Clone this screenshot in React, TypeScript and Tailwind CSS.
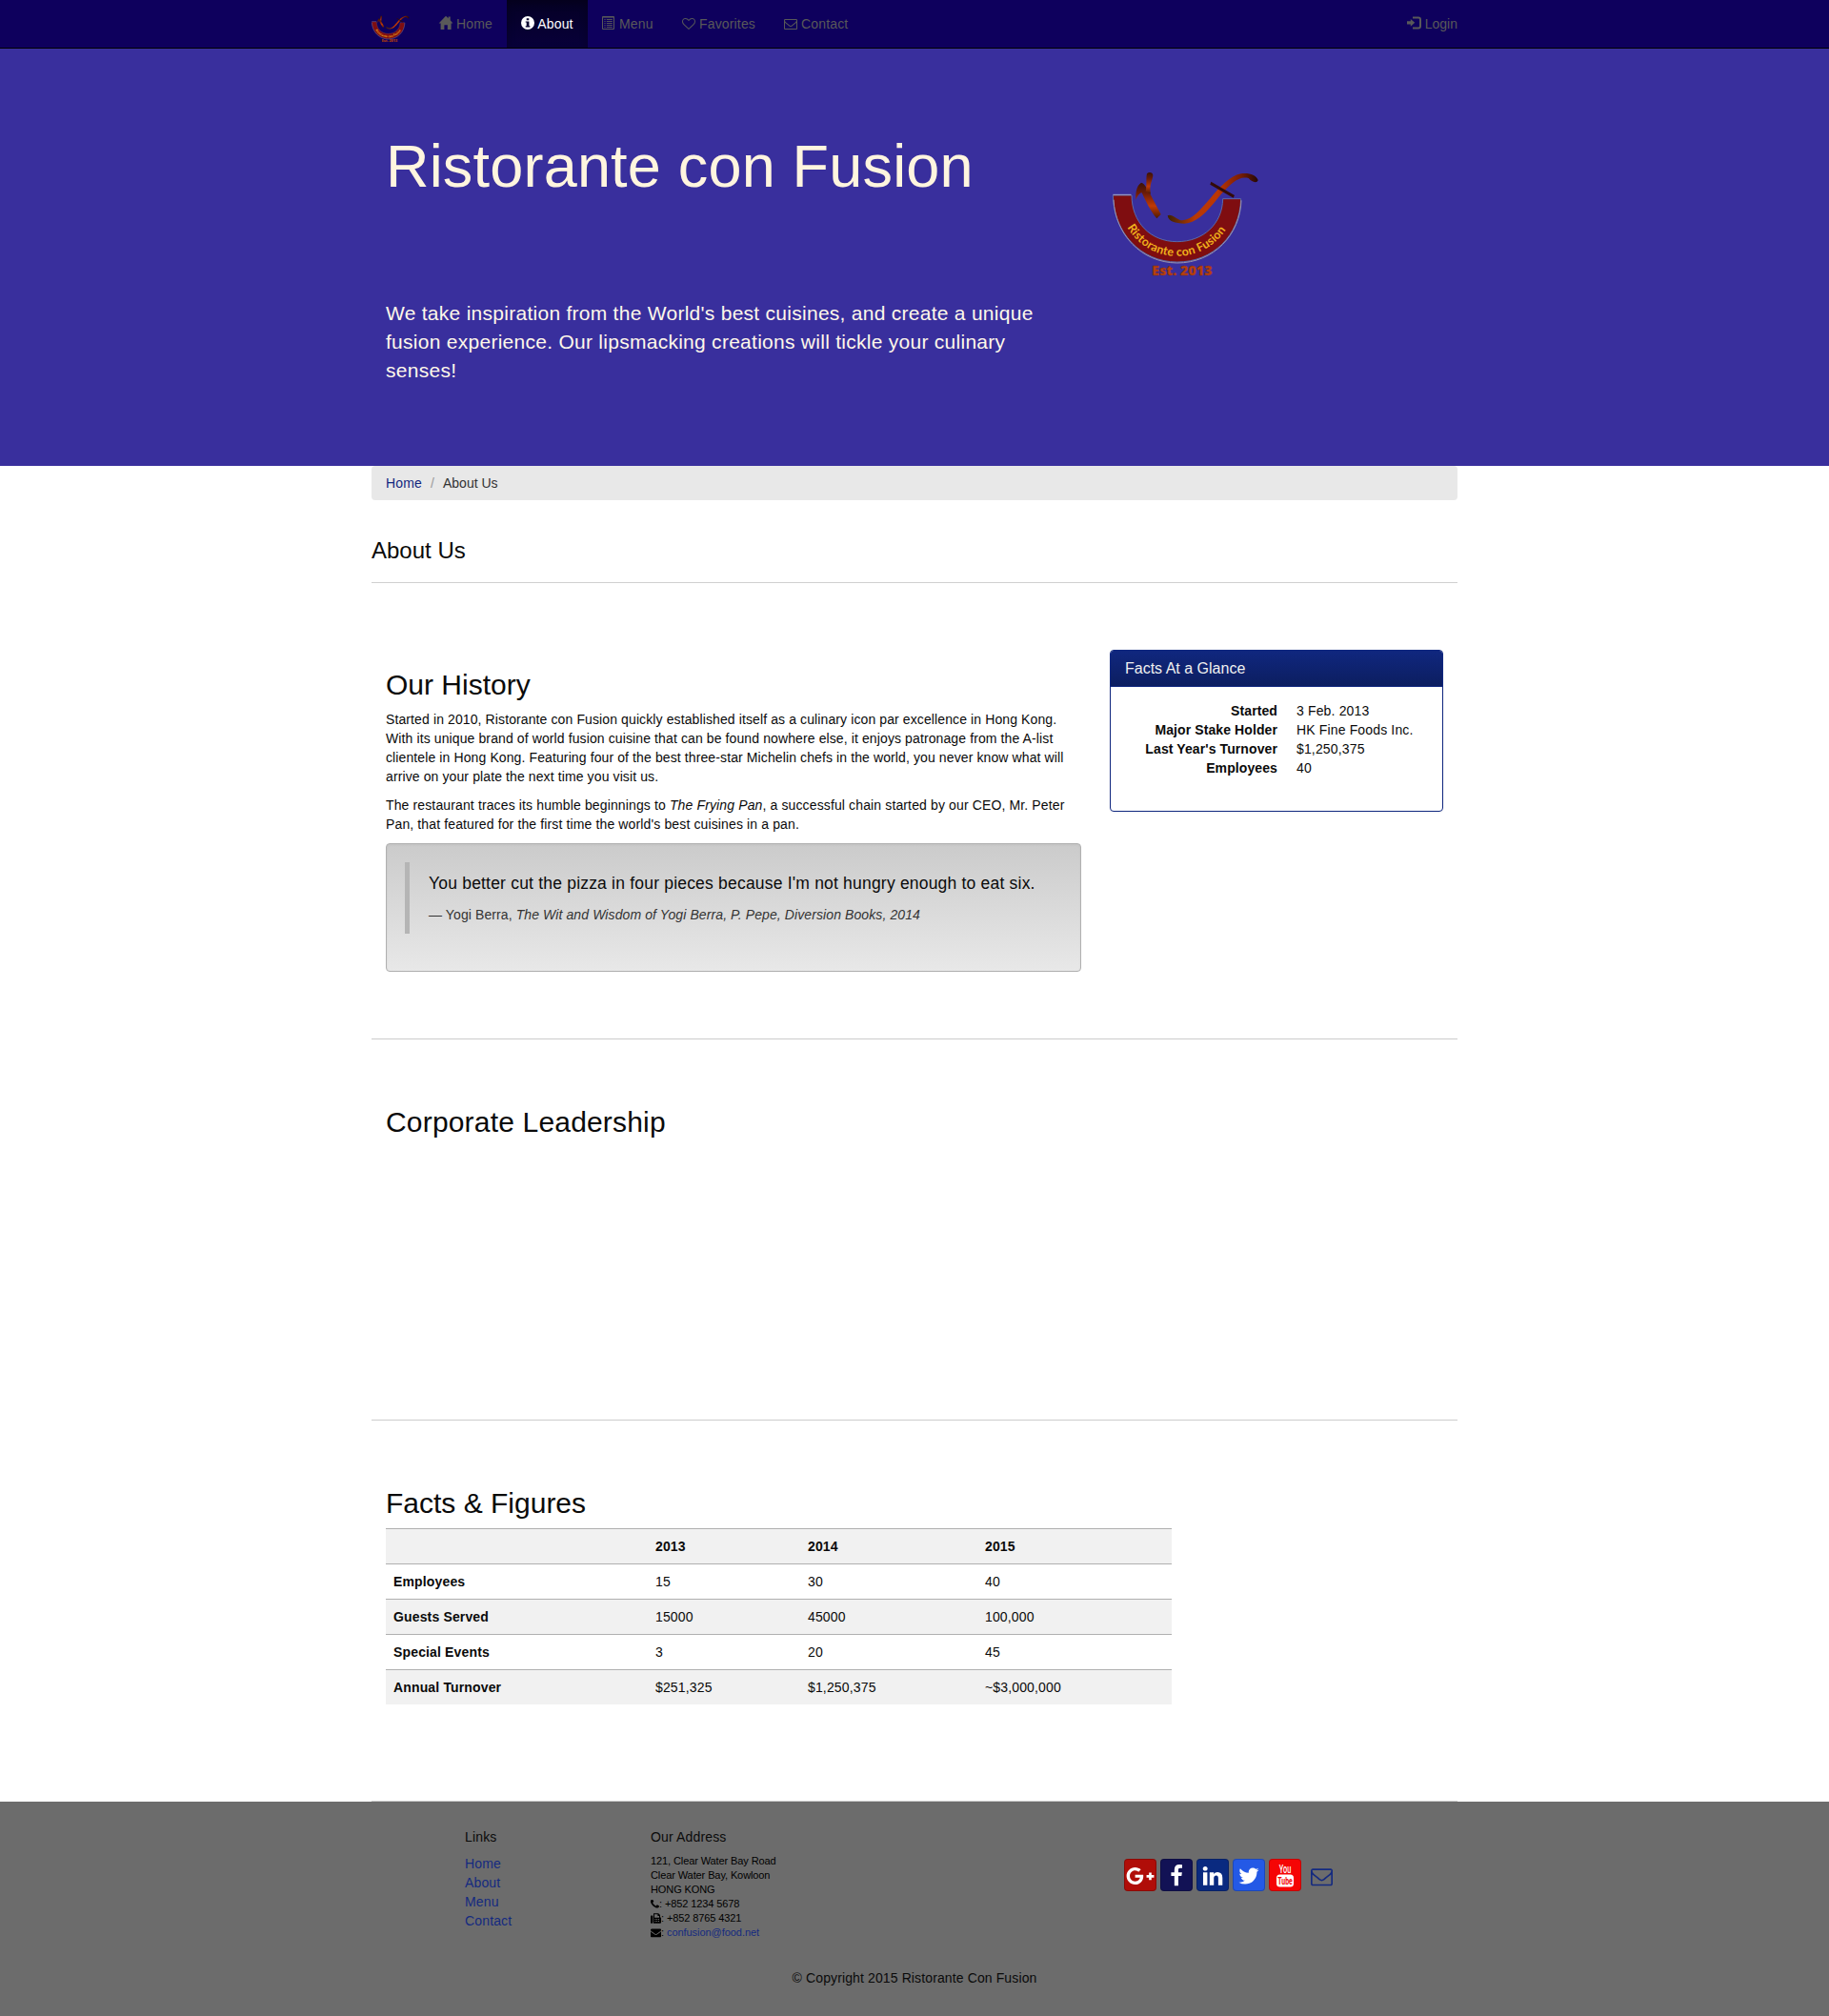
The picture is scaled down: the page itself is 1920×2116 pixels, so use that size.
import type { ReactNode } from "react";
import { FaGooglePlusG } from "react-icons/fa";

const PATHS = {
  heart:
    "M1664 596q0-81-21.5-143t-55-98.5-81.5-59.5-94-31-98-8-112 25.5-110.5 64-86.5 72-60 61.5q-18 22-49 22t-49-22q-24-28-60-61.5t-86.5-72-110.5-64-112-25.5-98 8-94 31-81.5 59.5-55 98.5-21.5 143q0 168 187 355l581 560 580-559q188-188 188-356zm128 0q0 221-229 450l-623 600q-18 18-44 18t-44-18l-624-602q-10-8-27.5-26t-55.5-65.5-68-97.5-53.5-121-23.5-138q0-220 127-344t351-124q62 0 126.5 21.5t120 58 95.5 68.5 76 68q36-36 76-68t95.5-68.5 120-58 126.5-21.5q224 0 351 124t127 344z",
  envelopeO:
    "M1664 1504v-768q-32 36-69 66-268 206-426 338-51 43-83 67t-86.5 48.5-102.5 24.5h-2q-48 0-102.5-24.5t-86.5-48.5-83-67q-158-132-426-338-37-30-69-66v768q0 13 9.5 22.5t22.5 9.5h1472q13 0 22.5-9.5t9.5-22.5zm0-1051v-24.5l-.5-13-3-12.5-5.5-9-9-7.5-14-2.5h-1472q-13 0-22.5 9.5t-9.5 22.5q0 168 147 284 193 152 401 317 6 5 35 29.5t46 37.5 44.5 31.5 50.5 27.5 43 9h2q20 0 43-9t50.5-27.5 44.5-31.5 46-37.5 35-29.5q208-165 401-317 54-43 100.5-115.5t46.5-131.5zm128-37v1088q0 66-47 113t-113 47h-1472q-66 0-113-47t-47-113v-1088q0-66 47-113t113-47h1472q66 0 113 47t47 113z",
  envelope:
    "M1792 710v794q0 66-47 113t-113 47h-1472q-66 0-113-47t-47-113v-794q44 49 101 87 362 246 497 345 57 42 92.5 65.5t94.5 48 110 24.5h2q51 0 110-24.5t94.5-48 92.5-65.5q170-123 498-345 57-39 100-87zm0-294q0 79-49 151t-122 123q-376 261-468 325-10 7-42.5 31t-54 38.5-52 32.5-57.5 27-50 9h-2q-23 0-50-9t-57.5-27-52-32.5-54-38.5-42.5-31q-91-64-262-182.5t-205-142.5q-62-42-117-115.5t-55-136.5q0-78 41.5-130t118.5-52h1472q65 0 112.5 47t47.5 113z",
  phone:
    "M1600 1240q0 27-10 70.5t-21 68.5q-21 50-122 106-94 51-186 51-27 0-53-3.5t-57.5-12.5-47-14.5-55.5-20.5-49-18q-98-35-175-83-127-79-264-216t-216-264q-48-77-83-175-3-9-18-49t-20.5-55.5-14.5-47-12.5-57.5-3.5-53q0-92 51-186 56-101 106-122 25-11 68.5-21t70.5-10q14 0 21 3 18 6 53 76 11 19 30 54t35 63.5 31 53.5q3 4 17.5 25t21.5 35.5 7 28.5q0 20-28.5 50t-62 55-62 53-28.5 46q0 9 5 22.5t8.5 20.5 14 24 11.5 19q76 137 174 235t235 174q2 1 19 11.5t24 14 20.5 8.5 22.5 5q18 0 46-28.5t53-62 55-62 50-28.5q14 0 28.5 7t35.5 21.5 25 17.5q25 15 53.5 31t63.5 35 54 30q70 35 76 53 3 7 3 21z",
  twitter:
    "M1684 408q-67 98-162 167 1 14 1 42 0 130-38 259.5t-115.5 248.5-184.5 210.5-258 146-323 54.5q-271 0-496-145 35 4 78 4 225 0 401-138-105-2-188-64.5t-114-159.5q33 5 61 5 43 0 85-11-112-23-185.5-111.5t-73.5-205.5v-4q68 38 146 41-66-44-105-115t-39-154q0-88 44-163 121 149 294.5 238.5t371.5 99.5q-8-38-8-74 0-134 94.5-228.5t228.5-94.5q140 0 236 102 109-21 205-78-37 115-142 178 93-10 186-50z",
  facebook:
    "M1343 12v264h-157q-86 0-116 36t-30 108v189h293l-39 296h-254v759h-306v-759h-255v-296h255v-218q0-186 104-288.5t277-102.5q147 0 228 12z",
  linkedin:
    "M477 625v991h-330v-991h330zm21-306q1 73-50.5 122t-135.5 49h-2q-82 0-132-49t-50-122q0-74 51.5-122.5t134.5-48.5 133 48.5 51 122.5zm1166 729v568h-329v-530q0-105-40.5-164.5t-126.5-59.5q-63 0-105.5 34.5t-63.5 85.5q-11 30-11 81v553h-329q2-399 2-647t-1-296l-1-48h329v144h-2q20-32 41-56t56.5-52 87-43.5 114.5-15.5q171 0 275 113.5t104 332.5z",
};

function Glyph({ d, className, viewBox = "0 0 1792 1792" }: { d: string; className: string; viewBox?: string }) {
  return (
    <svg viewBox={viewBox} className={className} fill="currentColor">
      <path d={d} />
    </svg>
  );
}

function HomeIcon() {
  return (
    <svg viewBox="0 0 14 14" className="inline-block h-3.5 w-3.5 overflow-visible align-[-1px]" fill="currentColor">
      <path d="M7 -.2 L9.6 2.3 V.6 H11.7 V4.2 L14.4 7.4 H12.6 V14 H8.8 V9.3 H5.4 V14 H1.6 V7.4 H-.4 Z" />
    </svg>
  );
}

function InfoIcon() {
  return (
    <svg viewBox="0 0 14 14" className="inline-block h-3.5 w-3.5 align-[-1px]" fill="currentColor">
      <path
        fillRule="evenodd"
        d="M7 0a7 7 0 1 1 0 14A7 7 0 0 1 7 0ZM5.7 2.3v2h2.6v-2ZM4.7 5.5v1.1h1v3.7h-1v1.2h4.7v-1.2h-1V5.5Z"
      />
    </svg>
  );
}

function ListIcon() {
  return (
    <svg viewBox="0 0 14 14" className="inline-block h-3.5 w-3.5 align-[-1px]" fill="none" stroke="currentColor">
      <path d="M.5 .5h12v13H.5Z M.5 1.1h12" />
      <path
        d="M2.4 3.5h1.2M4.8 3.5h6M2.4 5.5h1.2M4.8 5.5h6M2.4 7.5h1.2M4.8 7.5h6M2.4 9.5h1.2M4.8 9.5h6M2.4 11.5h1.2M4.8 11.5h6"
        strokeWidth=".9"
      />
    </svg>
  );
}

function LoginIcon() {
  return (
    <svg viewBox="0 0 15 14" className="inline-block h-3.5 w-[15px] align-[-1px]" fill="currentColor">
      <path d="M0 5.2h3.8V2.9L8.2 6.8 3.8 10.7V8.4H0Z" />
      <path d="M6 1.4h6q2 0 2 2v7.2q0 2-2 2H6" fill="none" stroke="currentColor" strokeWidth="2" />
    </svg>
  );
}

function FaxIcon() {
  return (
    <svg viewBox="0 0 11 11" className="inline-block h-[11px] w-[11px] align-[-2px]" fill="currentColor">
      <rect x="0" y="2.6" width="2.4" height="8.2" rx=".8" />
      <path
        fillRule="evenodd"
        d="M3 .2h5.2L10 2v2.2q1 .2 1 1.2v4.4q0 1-1 1H3ZM4 1.2v3.5h5V3H7.4V1.2ZM4.4 6v1h1V6Zm1.8 0v1h1V6ZM8 6v1h1V6ZM4.4 8v1h1V8Zm1.8 0v1h1V8ZM8 8v1h1V8Z"
      />
    </svg>
  );
}

function Logo({ id, className }: { id: string; className: string }) {
  const limb = `${id}-limb`;
  const swoosh = `${id}-swoosh`;
  const arc = `${id}-arc`;
  return (
    <svg viewBox="52 28 466 336" className={`${className} overflow-visible`} fill="none">
      <defs>
        <linearGradient id={limb} x1="0" y1="0" x2="0" y2="1">
          <stop offset="0" stopColor="#3a1208" />
          <stop offset=".3" stopColor="#6d1c08" />
          <stop offset=".65" stopColor="#c03a04" />
          <stop offset="1" stopColor="#4a1a04" />
        </linearGradient>
        <linearGradient id={swoosh} x1="0" y1="0" x2="1" y2="0">
          <stop offset="0" stopColor="#3a2204" />
          <stop offset=".3" stopColor="#b83804" />
          <stop offset=".55" stopColor="#bc3604" />
          <stop offset=".8" stopColor="#7a1e06" />
          <stop offset="1" stopColor="#250804" />
        </linearGradient>
        <path id={arc} d="M75 112A182 182 0 0 0 440 118" />
      </defs>
      <path
        d="M55 106H114C114 190 172 252 257 252C340 252 400 195 401 117H458C455 232 370 316 257 316C142 316 57 222 55 106Z"
        fill="#7f0d10"
        stroke="#5a78b8"
        strokeWidth="2.5"
      />
      <path d="M57 120C62 230 145 318 257 319C372 319 456 230 459 122" stroke="#9a94ae" strokeWidth="3" />
      <path d="M55 104H112" stroke="#b8b4cc" strokeWidth="2.5" />
      <text fill="#f0b01c" fontFamily="Lato, Open Sans, sans-serif" fontWeight="700" fontSize="37" letterSpacing="0">
        <textPath href={`#${arc}`} startOffset="17.3%" textLength="372">
          Ristorante con Fusion
        </textPath>
      </text>
      <text
        x="178"
        y="358"
        fill="#b8400c"
        stroke="#7a2a14"
        strokeWidth="1"
        fontFamily="Open Sans, Lato, sans-serif"
        fontWeight="800"
        fontSize="42"
        letterSpacing="0"
        textLength="190"
        lengthAdjust="spacingAndGlyphs"
      >
        Est. 2013
      </text>
      <path
        d="M127 120C126 100 128 76 144 66C156 70 158 80 166 90L206 166L193 179C176 160 160 128 146 98C136 100 132 110 127 120Z"
        fill={`url(#${limb})`}
      />
      <path d="M158 94C163 74 158 54 162 38C168 31 181 33 181 43C180 60 168 72 174 102Z" fill={`url(#${limb})`} />
      <path
        d="M227 170C238 164 248 176 266 184C302 190 330 150 356 122C390 82 420 46 458 38C482 34 506 42 512 58C508 70 492 64 482 52C450 44 424 72 398 100C360 144 330 190 280 195C252 194 230 190 227 170Z"
        fill={`url(#${swoosh})`}
      />
      <path d="M364 63L438 106L434 114L361 72Z" fill="#330b08" />
    </svg>
  );
}

function NavItem({ icon, label, className }: { icon: ReactNode; label: string; className: string }) {
  return (
    <a href="#" className={`${className} block h-[50px] py-[15px] pl-[15px] whitespace-nowrap`}>
      {icon} {label}
    </a>
  );
}

function Navbar() {
  return (
    <nav className="h-[51px] border-b border-black bg-[#0e005d]">
      <div className="mx-auto flex w-[1140px] text-[#595959]">
        <a href="#" className="block w-14 pt-4">
          <Logo id="brand" className="h-[29px] w-10" />
        </a>
        <NavItem className="w-[86px]" icon={<HomeIcon />} label="Home" />
        <NavItem
          className="w-[85px] bg-linear-to-b from-[#050024] to-[#08003a] text-white shadow-[inset_0_3px_9px_rgba(0,0,0,0.25)]"
          icon={<InfoIcon />}
          label="About"
        />
        <NavItem className="w-[84px]" icon={<ListIcon />} label="Menu" />
        <NavItem
          className="w-[107px]"
          icon={<Glyph d={PATHS.heart} className="inline-block h-3.5 w-3.5 align-[-2px]" />}
          label="Favorites"
        />
        <NavItem
          className="w-[100px]"
          icon={<Glyph d={PATHS.envelopeO} className="inline-block h-3.5 w-3.5 align-[-2px]" />}
          label="Contact"
        />
        <a href="#" className="ml-auto block pt-[15px] tracking-normal">
          <LoginIcon /> Login
        </a>
      </div>
    </nav>
  );
}

function Hero() {
  return (
    <header className="h-[438px] bg-[#392f9d] text-[#fff8ea]">
      <div className="mx-auto flex w-[1140px] px-[15px]">
        <div className="w-[762px] pt-[89px]">
          <h1 className="text-[63px] leading-[69.3px] tracking-[0.19px] text-[#fff5df]">Ristorante con Fusion</h1>
          <p className="mt-[105px] w-[700px] text-[21px] leading-[30px] tracking-[0.27px]">
            We take inspiration from the World's best cuisines, and create a unique fusion experience. Our lipsmacking
            creations will tickle your culinary senses!
          </p>
        </div>
        <Logo id="hero" className="mt-[128px] h-[112px] w-[156px]" />
      </div>
    </header>
  );
}

const FACTS = [
  ["Started", "3 Feb. 2013"],
  ["Major Stake Holder", "HK Fine Foods Inc."],
  ["Last Year's Turnover", "$1,250,375"],
  ["Employees", "40"],
];

function History() {
  return (
    <section className="flex gap-[30px] border-b border-[#cccccc] px-[15px] py-[50px]">
      <div className="w-[730px]">
        <h2 className="mt-5 mb-2.5 text-[30px] leading-[33px] tracking-normal">Our History</h2>
        <p className="mb-2.5 tracking-[0.11px]">
          Started in 2010, Ristorante con Fusion quickly established itself as a culinary icon par excellence in Hong
          Kong.
          <br />
          With its unique brand of world fusion cuisine that can be found nowhere else, it enjoys patronage from the
          A-list
          <br />
          clientele in Hong Kong. Featuring four of the best three-star Michelin chefs in the world, you never know what
          will
          <br />
          arrive on your plate the next time you visit us.
        </p>
        <p className="mb-2.5 tracking-[0.13px]">
          The restaurant traces its humble beginnings to <em>The Frying Pan</em>, a successful chain started by our CEO,
          Mr. Peter
          <br />
          Pan, that featured for the first time the world's best cuisines in a pan.
        </p>
        <div className="mb-5 h-[135px] rounded-[4px] border border-[#b0b0b0] bg-linear-to-b from-[#cbcbcb] to-[#e8e8e8] p-[19px] shadow-[inset_0_1px_3px_rgba(0,0,0,0.05)]">
          <blockquote className="border-l-5 border-[#b5b5b5] px-5 py-2.5">
            <p className="mb-2.5 text-[17.5px] leading-[25px] tracking-[0.2px]">
              You better cut the pizza in four pieces because I'm not hungry enough to eat six.
            </p>
            <footer className="tracking-[0.1px] text-[#333]">
              — Yogi Berra, <cite>The Wit and Wisdom of Yogi Berra, P. Pepe, Diversion Books, 2014</cite>
            </footer>
          </blockquote>
        </div>
      </div>
      <div className="h-[170px] w-[350px] overflow-hidden rounded-[4px] border border-[#10277f] shadow-[0_1px_2px_rgba(0,0,0,0.05)]">
        <h3 className="h-[37px] bg-linear-to-b from-[#10277f] to-[#0c1e60] px-[15px] py-2.5 text-[16px] leading-[17.6px] tracking-normal text-[#f0f0f0]">
          Facts At a Glance
        </h3>
        <div className="h-px bg-[#10277f]" />
        <dl className="grid grid-cols-[160px_1fr] gap-x-5 px-[15px] pt-[15px]">
          {FACTS.map(([term, value]) => (
            <div key={term} className="contents">
              <dt className="text-right font-bold tracking-[0.1px]">{term}</dt>
              <dd>{value}</dd>
            </div>
          ))}
        </dl>
      </div>
    </section>
  );
}

const ROWS = [
  ["Employees", "15", "30", "40"],
  ["Guests Served", "15000", "45000", "100,000"],
  ["Special Events", "3", "20", "45"],
  ["Annual Turnover", "$251,325", "$1,250,375", "~$3,000,000"],
];

function Figures() {
  return (
    <section className="h-[400px] border-b border-[#cccccc] px-[15px] pt-[50px]">
      <h2 className="mt-5 mb-2.5 text-[30px] leading-[33px] tracking-normal">Facts &amp; Figures</h2>
      <table className="w-[825px] table-fixed text-left">
        <colgroup>
          <col className="w-[275px]" />
          <col className="w-[160px]" />
          <col className="w-[186px]" />
          <col />
        </colgroup>
        <thead>
          <tr className="border-t border-[#b0b0b0] bg-[#f1f1f1]">
            <th className="p-2">&nbsp;</th>
            <th className="p-2">2013</th>
            <th className="p-2">2014</th>
            <th className="p-2">2015</th>
          </tr>
        </thead>
        <tbody>
          {ROWS.map(([name, ...values]) => (
            <tr key={name} className="border-t border-[#b0b0b0] odd:bg-white even:bg-[#f1f1f1]">
              <th className="p-2">{name}</th>
              {values.map((value) => (
                <td key={value} className="p-2">
                  {value}
                </td>
              ))}
            </tr>
          ))}
        </tbody>
      </table>
    </section>
  );
}

function Social({ className, children }: { className: string; children: ReactNode }) {
  return (
    <a
      href="#"
      className={`${className} flex h-[34px] w-[34px] items-center justify-center rounded-[4px] border border-black/20 text-white`}
    >
      {children}
    </a>
  );
}

function Footer() {
  return (
    <footer className="h-[225px] bg-[#6c6c6c]">
      <div className="mx-auto flex h-[154px] w-[1140px] pt-[30px]">
        <div className="ml-[98px] w-[195px]">
          <h5 className="mb-2.5 leading-[15.4px]">Links</h5>
          <ul className="text-[#142a80]">
            <li>Home</li>
            <li>About</li>
            <li>Menu</li>
            <li>Contact</li>
          </ul>
        </div>
        <div className="w-[497px]">
          <h5 className="mb-2.5 leading-[15.4px]">Our Address</h5>
          <address className="text-[11px] leading-[15px] tracking-[-0.1px] text-black not-italic">
            121, Clear Water Bay Road
            <br />
            Clear Water Bay, Kowloon
            <br />
            HONG KONG
            <br />
            <Glyph d={PATHS.phone} viewBox="192 192 1408 1408" className="inline-block h-[9px] w-[9px] align-[-1px]" />:
            +852 1234 5678
            <br />
            <FaxIcon />: +852 8765 4321
            <br />
            <Glyph d={PATHS.envelope} className="inline-block h-[11px] w-[11px] align-[-2px]" />:{" "}
            <a href="#" className="tracking-[-0.05px] text-[#142a80]">
              confusion@food.net
            </a>
          </address>
        </div>
        <div className="mt-[30px] flex h-[34px] gap-1">
          <Social className="bg-[#b00d08] pt-0.5">
            <FaGooglePlusG className="h-[30px] w-[30px] shrink-0" />
          </Social>
          <Social className="bg-[#121255] pt-0.5">
            <Glyph d={PATHS.facebook} className="h-6 w-6" />
          </Social>
          <Social className="bg-[#0a2a80] pt-0.5">
            <Glyph d={PATHS.linkedin} className="h-6 w-6" />
          </Social>
          <Social className="bg-[#2459e6] pt-0.5">
            <Glyph d={PATHS.twitter} className="h-6 w-6" />
          </Social>
          <Social className="bg-[#f50505]">
            <svg
              viewBox="0 0 24 24"
              className="h-6 w-6 overflow-visible"
              fontFamily="Roboto, sans-serif"
              textAnchor="middle"
              letterSpacing="0"
            >
              <text x="12" y="10.4" fontSize="12" fontWeight="500" fill="#fff" textLength="12.5" lengthAdjust="spacingAndGlyphs">
                You
              </text>
              <rect x="3" y="11.6" width="18" height="12.8" rx="3.5" fill="#fff" />
              <text x="12" y="22" fontSize="11.5" fontWeight="700" fill="#f50505" textLength="15.5" lengthAdjust="spacingAndGlyphs">
                Tube
              </text>
            </svg>
          </Social>
          <a href="#" className="ml-[6px] flex h-[34px] items-center pt-0.5 text-[#142a80]">
            <Glyph d={PATHS.envelopeO} className="h-[23px] w-[23px]" />
          </a>
        </div>
      </div>
      <p className="pt-[21px] text-center tracking-[0.12px]">© Copyright 2015 Ristorante Con Fusion</p>
    </footer>
  );
}

export default function App() {
  return (
    <div className="bg-white font-['Liberation_Sans',Arial,sans-serif] text-[14px] leading-5 tracking-[0.15px] text-[#0a0a0a]">
      <Navbar />
      <Hero />
      <main className="mx-auto w-[1140px]">
        <div className="h-9 rounded-[4px] bg-[#e8e8e8] px-[15px] py-2">
          <a href="#" className="text-[#12277f]">
            Home
          </a>
          <span className="px-[9px] text-[#999]">/</span>
          <span className="tracking-normal text-[#333]">About Us</span>
        </div>
        <h3 className="my-5 h-[67px] border-b border-[#d0d0d0] pt-5 text-[24px] leading-[26.4px] tracking-normal">
          About Us
        </h3>
        <History />
        <section className="h-[400px] border-b border-[#cccccc] px-[15px] pt-[50px]">
          <h2 className="mt-5 mb-2.5 text-[30px] leading-[33px] tracking-[0.18px]">Corporate Leadership</h2>
        </section>
        <Figures />
      </main>
      <Footer />
    </div>
  );
}
